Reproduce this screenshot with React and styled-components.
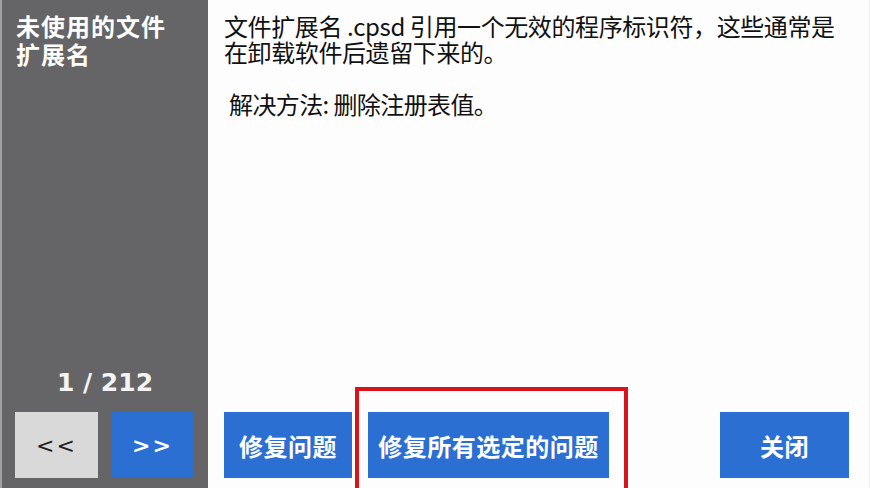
import React from 'react';
import styled, { createGlobalStyle } from 'styled-components';

const GlobalStyle = createGlobalStyle`
  html, body {
    margin: 0;
    padding: 0;
    height: 488px;
    overflow: hidden;
    background: #fdfdfe;
    font-family: 'Noto Sans CJK SC', 'Noto Sans', sans-serif;
  }
`

const Frame = styled.div`
  display: flex;
  width: 870px;
  height: 488px;
  box-sizing: border-box;
  border-left: 2px solid #a2a2a2;
`

const Sidebar = styled.aside`
  width: 206px;
  flex-shrink: 0;
  background: #656466;
  display: flex;
  flex-direction: column;
  padding: 12px 13px 10px 13px;
  box-sizing: border-box;
`

const SideTitle = styled.h1`
  margin: 0;
  padding-left: 1px;
  color: #fff;
  font-size: 24px;
  font-weight: 700;
  line-height: 28px;
  letter-spacing: 1px;
`

const Counter = styled.div`
  margin-top: auto;
  margin-bottom: 15px;
  text-align: center;
  color: #f4f4f4;
  font-family: 'DejaVu Sans', sans-serif;
  font-weight: 700;
  font-size: 25px;
`

const NavRow = styled.div`
  display: grid;
  grid-template-columns: 83px 81px;
  gap: 14px;
`

const NavButton = styled.button`
  height: 66px;
  border: none;
  padding: 0;
  background: ${p => (p.$primary ? '#2b6fd3' : '#d9d9d9')};
  color: ${p => (p.$primary ? '#fff' : '#222')};
  font-family: 'DejaVu Sans', sans-serif;
  font-weight: ${p => (p.$primary ? 700 : 400)};
  font-size: 22px;
  letter-spacing: 2px;
`

const Main = styled.main`
  flex: 1;
  display: flex;
  flex-direction: column;
  padding: 13px 20px 10px 16px;
  border-right: 1px solid #ececec;
  box-sizing: border-box;
`

const Message = styled.p`
  margin: 0;
  color: #111;
  font-size: 24px;
  line-height: 26px;
  letter-spacing: -0.4px;
`

const Fix = styled.p`
  margin: 26px 0 0 5px;
  color: #111;
  font-size: 24px;
  line-height: 26px;
  letter-spacing: -0.6px;
`

const ButtonRow = styled.div`
  margin-top: auto;
  display: flex;
  align-items: flex-end;
  gap: 16px;
`

const ActionButton = styled.button`
  height: 66px;
  width: ${p => p.$w}px;
  border: none;
  padding: 0;
  background: #2b6fd3;
  color: #fff;
  font-family: 'Noto Sans CJK SC', sans-serif;
  font-weight: 700;
  font-size: 24px;
  letter-spacing: 0.5px;
`

/* red annotation frame drawn over the selected button */
const Highlight = styled.div`
  position: relative;
  &::after {
    content: '';
    position: absolute;
    top: -25px;
    left: -13px;
    right: -19px;
    bottom: -40px;
    border: 4px solid #d8141a;
    pointer-events: none;
  }
`

const Push = styled.div`
  margin-left: auto;
`

export default function App() {
  return (
    <>
      <GlobalStyle />
      <Frame>
        <Sidebar>
          <SideTitle>未使用的文件<br />扩展名</SideTitle>
          <Counter>1 / 212</Counter>
          <NavRow>
            <NavButton>&lt;&lt;</NavButton>
            <NavButton $primary>&gt;&gt;</NavButton>
          </NavRow>
        </Sidebar>
        <Main>
          <Message>
            文件扩展名 .cpsd 引用一个无效的程序标识符，这些通常是<br />
            在卸载软件后遗留下来的。
          </Message>
          <Fix>解决方法: 删除注册表值。</Fix>
          <ButtonRow>
            <ActionButton $w={128}>修复问题</ActionButton>
            <Highlight>
              <ActionButton $w={241}>修复所有选定的问题</ActionButton>
            </Highlight>
            <Push>
              <ActionButton $w={129}>关闭</ActionButton>
            </Push>
          </ButtonRow>
        </Main>
      </Frame>
    </>
  );
}
